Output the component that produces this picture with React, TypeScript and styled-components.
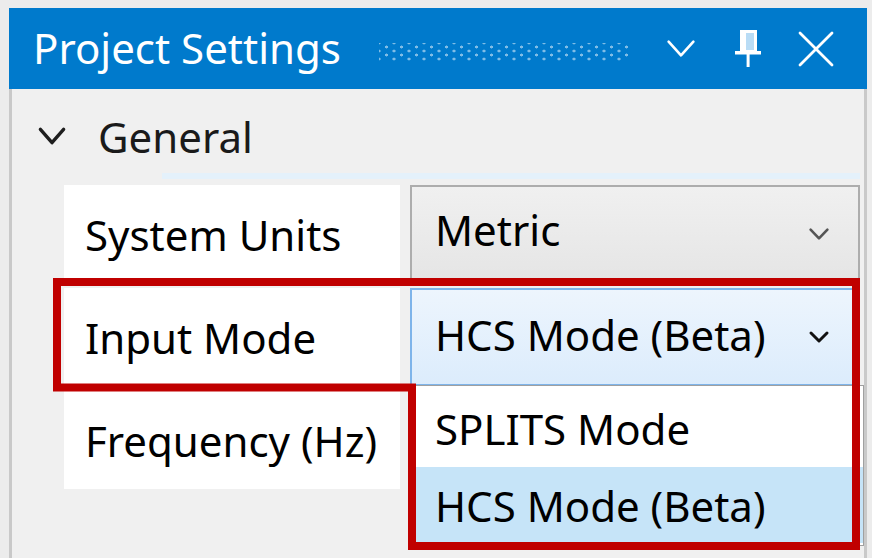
import React from "react";
import styled, { createGlobalStyle } from "styled-components";

const GlobalStyle = createGlobalStyle`
  html, body { margin: 0; padding: 0; }
  body {
    background: #ececec;
    font-family: "Noto Sans", "Open Sans", sans-serif;
    overflow: hidden;
  }
`;

const Page = styled.div`
  position: relative;
  width: 872px;
  height: 558px;
  padding: 8px 5px 0 9px;
  box-sizing: border-box;
`;

const Window = styled.div`
  display: flex;
  flex-direction: column;
  height: 100%;
`;

const TitleBar = styled.div`
  height: 81px;
  flex: none;
  background: #007acc;
  display: flex;
  align-items: center;
  padding: 0 33px 0 24px;
  color: #fff;
`;

const Title = styled.div`
  font-size: 42px;
  white-space: nowrap;
  line-height: 1;
  padding-bottom: 2px;
`;

const Grip = styled.div`
  flex: 1;
  height: 18px;
  margin: 6px 34px 0 38px;
  background-image:
    radial-gradient(circle, rgba(255, 255, 255, 0.5) 1.3px, transparent 1.7px),
    radial-gradient(circle, rgba(255, 255, 255, 0.5) 1.3px, transparent 1.7px);
  background-size: 15px 8px, 15px 8px;
  background-position: 0 0, 7.5px 4px;
`;

const TitleIcons = styled.div`
  display: flex;
  align-items: center;
`;

const IconSlot = styled.div<{ $w: number; $ml: number }>`
  width: ${(p) => p.$w}px;
  margin-left: ${(p) => p.$ml}px;
  display: flex;
  align-items: center;
  justify-content: center;
  svg { display: block; }
`;

const Body = styled.div`
  flex: 1;
  background: #f0f0f0;
  border-left: 3px solid #c9c9c9;
  border-right: 3px solid #c9c9c9;
  display: flex;
  flex-direction: column;
`;

const CategoryRow = styled.div`
  height: 84px;
  box-sizing: border-box;
  padding: 10px 0 0 25px;
  display: flex;
  align-items: center;
  gap: 31px;
  font-size: 42px;
  color: #1a1a1a;
`;

const CategoryLine = styled.div`
  height: 6px;
  margin: 0 4px 6px 150px;
  background: #e4f1fb;
`;

const Grid = styled.div`
  margin-left: 52px;
  width: 796px;
  display: grid;
  grid-template-columns: 336px 450px;
  grid-auto-rows: 98px;
  column-gap: 10px;
  row-gap: 5px;
`;

const Label = styled.div`
  background: #fff;
  display: flex;
  align-items: center;
  padding: 0 0 0 21px;
  font-size: 42px;
  color: #000;
  white-space: nowrap;
`;

const ValueCell = styled.div`
  position: relative;
`;

const Combo = styled.div<{ $active?: boolean }>`
  height: 100%;
  box-sizing: border-box;
  border: 2px solid ${(p) => (p.$active ? "#7eb4ea" : "#adadad")};
  background: ${(p) =>
    p.$active
      ? "linear-gradient(#edf5fd, #dcecfc)"
      : "linear-gradient(#f0f0f0, #e5e5e5)"};
  display: flex;
  align-items: center;
  justify-content: space-between;
  padding: 0 28px 0 23px;
  font-size: 42px;
  color: #000;
  white-space: nowrap;
`;

const ComboText = styled.span<{ $lift: number }>`
  margin-bottom: ${(p) => p.$lift * 2}px;
`;

const DropList = styled.div`
  position: absolute;
  top: -6px;
  left: 0;
  right: -4px;
  height: 161px;
  box-sizing: border-box;
  border: 1px solid #a0a0a0;
  background: #fff;
  padding-top: 3px;
  display: flex;
  flex-direction: column;
  z-index: 2;
`;

const DropItem = styled.div<{ $selected?: boolean }>`
  height: ${(p) => (p.$selected ? 76 : 78)}px;
  box-sizing: border-box;
  display: flex;
  align-items: center;
  padding-left: 24px;
  font-size: 42px;
  color: #000;
  background: ${(p) => (p.$selected ? "#c6e4f8" : "#fff")};
  white-space: nowrap;
`;

const Annotation = styled.svg`
  position: absolute;
  left: 0;
  top: 0;
  pointer-events: none;
  z-index: 5;
`;

const ChevronDown = ({ w, h, color, sw }: { w: number; h: number; color: string; sw: number }) => (
  <svg width={w} height={h} viewBox={`0 0 ${w} ${h}`}>
    <polyline
      points={`${sw},${sw} ${w / 2},${h - sw} ${w - sw},${sw}`}
      fill="none"
      stroke={color}
      strokeWidth={sw}
      strokeLinecap="round"
      strokeLinejoin="round"
    />
  </svg>
);

export default function App() {
  return (
    <>
      <GlobalStyle />
      <Page>
        <Window>
          <TitleBar>
            <Title>Project Settings</Title>
            <Grip />
            <TitleIcons>
              <IconSlot $w={30} $ml={0}>
                <ChevronDown w={30} h={19} color="#ffffff" sw={2.6} />
              </IconSlot>
              <IconSlot $w={28} $ml={38}>
                <svg width="28" height="38" viewBox="0 0 28 38">
                  <rect x="7.5" y="1.5" width="14" height="20" fill="#b9dcf5" stroke="#fff" strokeWidth="3" />
                  <rect x="7" y="1" width="5" height="21" fill="#fff" />
                  <rect x="1" y="21" width="26" height="3.5" fill="#fff" />
                  <rect x="12.6" y="23" width="3" height="14" fill="#fff" />
                </svg>
              </IconSlot>
              <IconSlot $w={36} $ml={36}>
                <svg width="36" height="36" viewBox="0 0 36 36">
                  <path d="M2 2 L34 34 M34 2 L2 34" stroke="#fff" strokeWidth="2.8" strokeLinecap="round" />
                </svg>
              </IconSlot>
            </TitleIcons>
          </TitleBar>
          <Body>
            <CategoryRow>
              <ChevronDown w={30} h={20} color="#1e1e1e" sw={3.4} />
              <span>General</span>
            </CategoryRow>
            <CategoryLine />
            <Grid>
              <Label>System Units</Label>
              <ValueCell>
                <Combo>
                  <ComboText $lift={5}>Metric</ComboText>
                  <ChevronDown w={22} h={14} color="#555555" sw={2.6} />
                </Combo>
              </ValueCell>
              <Label>Input Mode</Label>
              <ValueCell>
                <Combo $active>
                  <ComboText $lift={3}>HCS Mode (Beta)</ComboText>
                  <ChevronDown w={22} h={14} color="#111111" sw={3} />
                </Combo>
              </ValueCell>
              <Label>Frequency (Hz)</Label>
              <ValueCell>
                <DropList>
                  <DropItem>SPLITS Mode</DropItem>
                  <DropItem $selected>HCS Mode (Beta)</DropItem>
                </DropList>
              </ValueCell>
            </Grid>
          </Body>
        </Window>
        <Annotation width="872" height="558" viewBox="0 0 872 558">
          <path
            d="M57 282 H856 V546 H412 V387.5 H57 Z"
            fill="none"
            stroke="#c00000"
            strokeWidth="8"
          />
        </Annotation>
      </Page>
    </>
  );
}
